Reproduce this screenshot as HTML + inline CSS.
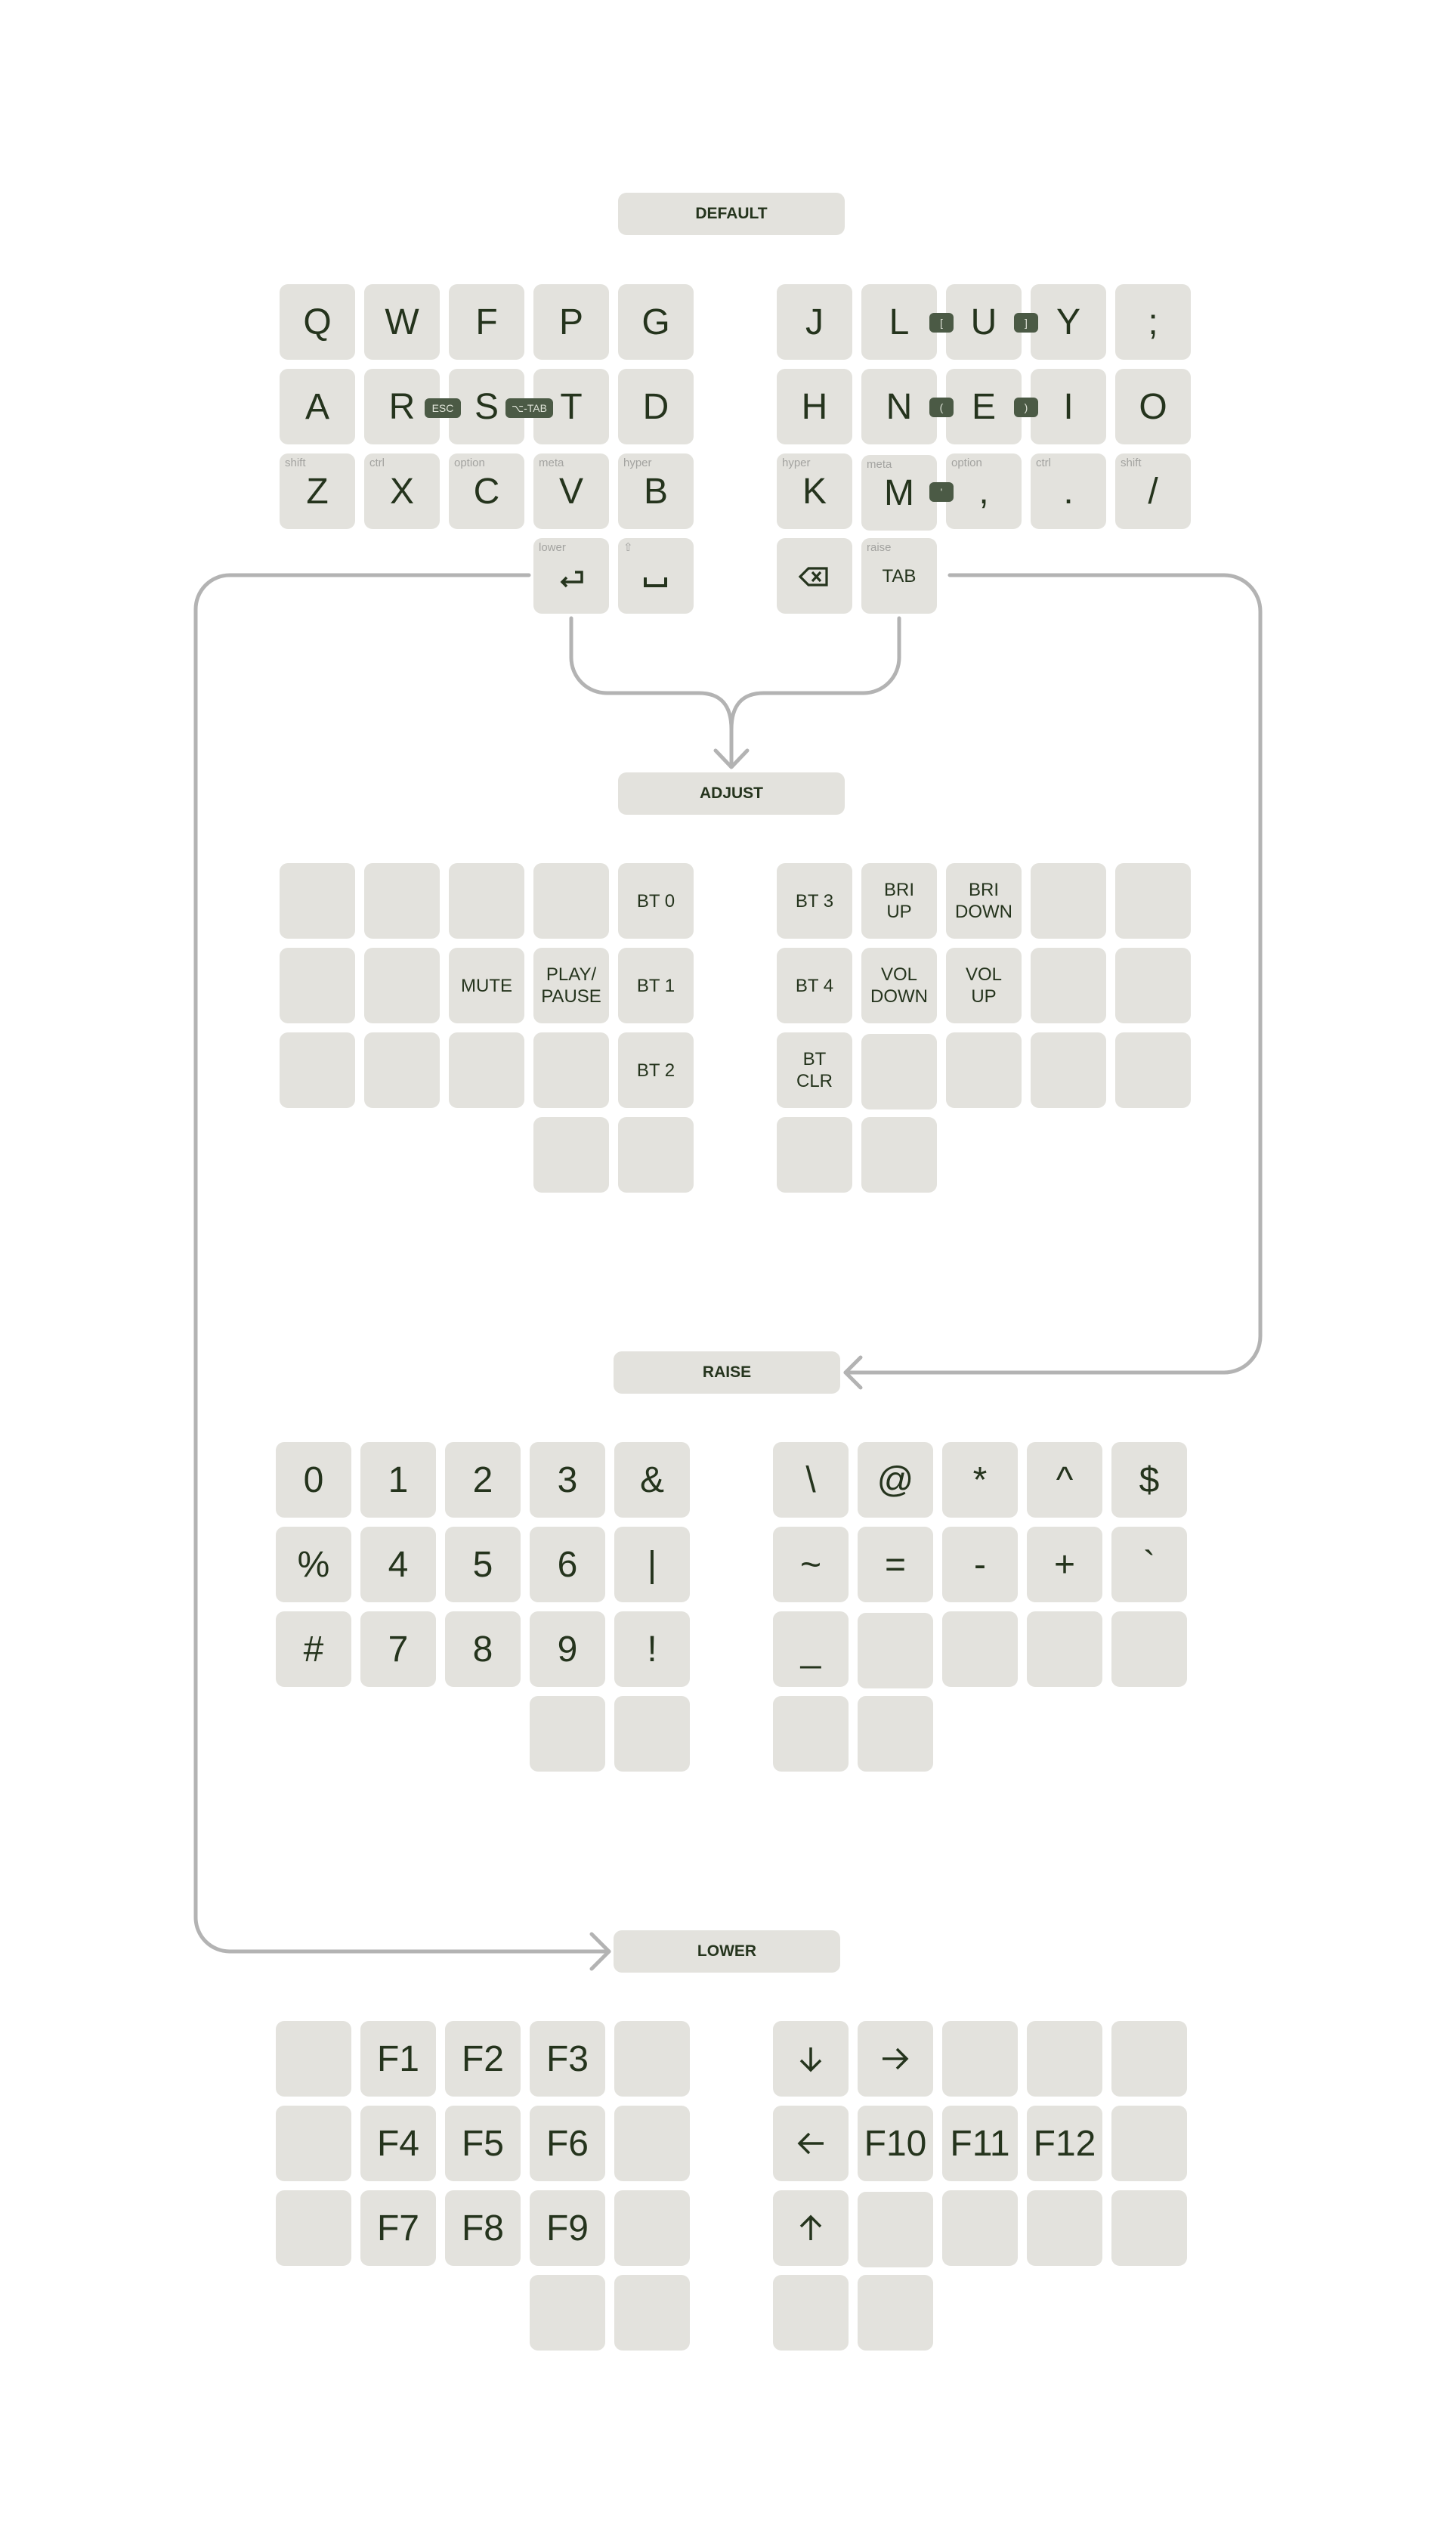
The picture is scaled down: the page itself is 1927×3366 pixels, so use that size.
<!DOCTYPE html>
<html><head><meta charset="utf-8">
<style>
html,body{margin:0;padding:0;background:#fff;}
body{width:1927px;height:3366px;position:relative;overflow:hidden;font-family:"Liberation Sans",sans-serif;}
.k{position:absolute;width:100px;height:100px;background:#e3e2dd;border-radius:11px;display:flex;align-items:center;justify-content:center;color:#25341d;font-size:48px;text-align:center;}
.s{font-size:24px;line-height:29px;}
.m{position:absolute;left:7px;top:4px;font-size:15px;color:#a3a3a0;line-height:18px;}
.lbl{position:absolute;width:300px;height:56px;background:#e3e2dd;border-radius:11px;display:flex;align-items:center;justify-content:center;color:#25341d;font-size:21px;font-weight:bold;}
.b{position:absolute;height:26px;background:#4b5a45;border-radius:6px;color:#dfe3d8;font-size:14px;display:flex;align-items:center;justify-content:center;z-index:2;}
svg.lines{position:absolute;left:0;top:0;}
</style></head><body>
<svg class="lines" width="1927" height="3366" fill="none" stroke="#b3b3b3" stroke-width="5" stroke-linecap="round" stroke-linejoin="round">
<path d="M700 761 H304 A45 45 0 0 0 259 806 V2537 A45 45 0 0 0 304 2582 H806"/>
<path d="M783 2559 L806 2582 L783 2605"/>
<path d="M1257 761 H1620 A48 48 0 0 1 1668 809 V1768 A48 48 0 0 1 1620 1816 H1119"/>
<path d="M1139 1796 L1119 1816 L1139 1836"/>
<path d="M756 818 V870 A47 47 0 0 0 803 917 H925 Q968 917 968 965 V1014"/>
<path d="M1190 818 V870 A47 47 0 0 1 1143 917 H1011 Q968 917 968 965"/>
<path d="M947 993 L968 1015 L989 993"/>
</svg>

<div class="lbl" style="left:818px;top:255px">DEFAULT</div>
<div class="k" style="left:370px;top:376px">Q</div>
<div class="k" style="left:482px;top:376px">W</div>
<div class="k" style="left:594px;top:376px">F</div>
<div class="k" style="left:706px;top:376px">P</div>
<div class="k" style="left:818px;top:376px">G</div>
<div class="k" style="left:1028px;top:376px">J</div>
<div class="k" style="left:1140px;top:376px">L</div>
<div class="k" style="left:1252px;top:376px">U</div>
<div class="k" style="left:1364px;top:376px">Y</div>
<div class="k" style="left:1476px;top:376px">;</div>

<div class="k" style="left:370px;top:488px">A</div>
<div class="k" style="left:482px;top:488px">R</div>
<div class="k" style="left:594px;top:488px">S</div>
<div class="k" style="left:706px;top:488px">T</div>
<div class="k" style="left:818px;top:488px">D</div>
<div class="k" style="left:1028px;top:488px">H</div>
<div class="k" style="left:1140px;top:488px">N</div>
<div class="k" style="left:1252px;top:488px">E</div>
<div class="k" style="left:1364px;top:488px">I</div>
<div class="k" style="left:1476px;top:488px">O</div>

<div class="k" style="left:370px;top:600px"><span class="m">shift</span>Z</div>
<div class="k" style="left:482px;top:600px"><span class="m">ctrl</span>X</div>
<div class="k" style="left:594px;top:600px"><span class="m">option</span>C</div>
<div class="k" style="left:706px;top:600px"><span class="m">meta</span>V</div>
<div class="k" style="left:818px;top:600px"><span class="m">hyper</span>B</div>
<div class="k" style="left:1028px;top:600px"><span class="m">hyper</span>K</div>
<div class="k" style="left:1140px;top:602px"><span class="m">meta</span>M</div>
<div class="k" style="left:1252px;top:600px"><span class="m">option</span>,</div>
<div class="k" style="left:1364px;top:600px"><span class="m">ctrl</span>.</div>
<div class="k" style="left:1476px;top:600px"><span class="m">shift</span>/</div>

<div class="k" style="left:706px;top:712px"><span class="m">lower</span>
<svg width="100" height="100" style="position:absolute;left:0;top:0" fill="none" stroke="#25341d" stroke-width="3.5"><path d="M55 45 H64 V58 H38"/><path d="M44 52 L38 58 L44 64"/></svg></div>
<div class="k" style="left:818px;top:712px"><span class="m">⇧</span>
<svg width="100" height="100" style="position:absolute;left:0;top:0" fill="none" stroke="#25341d" stroke-width="4"><path d="M36 52 V63 H63 V52"/></svg></div>
<div class="k" style="left:1028px;top:712px">
<svg width="100" height="100" style="position:absolute;left:0;top:0" fill="none" stroke="#25341d" stroke-width="3.2" stroke-linejoin="miter"><path d="M42 40 H66 V62 H42 L31 51 Z"/><path d="M47 45 L58 57 M58 45 L47 57"/></svg></div>
<div class="k s" style="left:1140px;top:712px"><span class="m">raise</span>TAB</div>

<div class="b" style="left:562px;top:527px;width:48px">ESC</div>
<div class="b" style="left:669px;top:527px;width:63px">⌥-TAB</div>
<div class="b" style="left:1230px;top:414px;width:32px">[</div>
<div class="b" style="left:1342px;top:414px;width:32px">]</div>
<div class="b" style="left:1230px;top:526px;width:32px">(</div>
<div class="b" style="left:1342px;top:526px;width:32px">)</div>
<div class="b" style="left:1230px;top:638px;width:32px">'</div>

<div class="lbl" style="left:818px;top:1022px">ADJUST</div>
<div class="k" style="left:370px;top:1142px"></div>
<div class="k" style="left:482px;top:1142px"></div>
<div class="k" style="left:594px;top:1142px"></div>
<div class="k" style="left:706px;top:1142px"></div>
<div class="k s" style="left:818px;top:1142px">BT 0</div>
<div class="k s" style="left:1028px;top:1142px">BT 3</div>
<div class="k s" style="left:1140px;top:1142px">BRI<br>UP</div>
<div class="k s" style="left:1252px;top:1142px">BRI<br>DOWN</div>
<div class="k" style="left:1364px;top:1142px"></div>
<div class="k" style="left:1476px;top:1142px"></div>

<div class="k" style="left:370px;top:1254px"></div>
<div class="k" style="left:482px;top:1254px"></div>
<div class="k s" style="left:594px;top:1254px">MUTE</div>
<div class="k s" style="left:706px;top:1254px">PLAY/<br>PAUSE</div>
<div class="k s" style="left:818px;top:1254px">BT 1</div>
<div class="k s" style="left:1028px;top:1254px">BT 4</div>
<div class="k s" style="left:1140px;top:1254px">VOL<br>DOWN</div>
<div class="k s" style="left:1252px;top:1254px">VOL<br>UP</div>
<div class="k" style="left:1364px;top:1254px"></div>
<div class="k" style="left:1476px;top:1254px"></div>

<div class="k" style="left:370px;top:1366px"></div>
<div class="k" style="left:482px;top:1366px"></div>
<div class="k" style="left:594px;top:1366px"></div>
<div class="k" style="left:706px;top:1366px"></div>
<div class="k s" style="left:818px;top:1366px">BT 2</div>
<div class="k s" style="left:1028px;top:1366px">BT<br>CLR</div>
<div class="k" style="left:1140px;top:1368px"></div>
<div class="k" style="left:1252px;top:1366px"></div>
<div class="k" style="left:1364px;top:1366px"></div>
<div class="k" style="left:1476px;top:1366px"></div>

<div class="k" style="left:706px;top:1478px"></div>
<div class="k" style="left:818px;top:1478px"></div>
<div class="k" style="left:1028px;top:1478px"></div>
<div class="k" style="left:1140px;top:1478px"></div>

<div class="lbl" style="left:812px;top:1788px">RAISE</div>
<div class="k" style="left:365px;top:1908px">0</div>
<div class="k" style="left:477px;top:1908px">1</div>
<div class="k" style="left:589px;top:1908px">2</div>
<div class="k" style="left:701px;top:1908px">3</div>
<div class="k" style="left:813px;top:1908px">&amp;</div>
<div class="k" style="left:1023px;top:1908px">\</div>
<div class="k" style="left:1135px;top:1908px">@</div>
<div class="k" style="left:1247px;top:1908px">*</div>
<div class="k" style="left:1359px;top:1908px">^</div>
<div class="k" style="left:1471px;top:1908px">$</div>

<div class="k" style="left:365px;top:2020px">%</div>
<div class="k" style="left:477px;top:2020px">4</div>
<div class="k" style="left:589px;top:2020px">5</div>
<div class="k" style="left:701px;top:2020px">6</div>
<div class="k" style="left:813px;top:2020px">|</div>
<div class="k" style="left:1023px;top:2020px">~</div>
<div class="k" style="left:1135px;top:2020px">=</div>
<div class="k" style="left:1247px;top:2020px">-</div>
<div class="k" style="left:1359px;top:2020px">+</div>
<div class="k" style="left:1471px;top:2020px">`</div>

<div class="k" style="left:365px;top:2132px">#</div>
<div class="k" style="left:477px;top:2132px">7</div>
<div class="k" style="left:589px;top:2132px">8</div>
<div class="k" style="left:701px;top:2132px">9</div>
<div class="k" style="left:813px;top:2132px">!</div>
<div class="k" style="left:1023px;top:2132px">_</div>
<div class="k" style="left:1135px;top:2134px"></div>
<div class="k" style="left:1247px;top:2132px"></div>
<div class="k" style="left:1359px;top:2132px"></div>
<div class="k" style="left:1471px;top:2132px"></div>

<div class="k" style="left:701px;top:2244px"></div>
<div class="k" style="left:813px;top:2244px"></div>
<div class="k" style="left:1023px;top:2244px"></div>
<div class="k" style="left:1135px;top:2244px"></div>

<div class="lbl" style="left:812px;top:2554px">LOWER</div>
<div class="k" style="left:365px;top:2674px"></div>
<div class="k" style="left:477px;top:2674px">F1</div>
<div class="k" style="left:589px;top:2674px">F2</div>
<div class="k" style="left:701px;top:2674px">F3</div>
<div class="k" style="left:813px;top:2674px"></div>
<div class="k" style="left:1023px;top:2674px"><svg width="40" height="40" fill="none" stroke="#25341d" stroke-width="3.5"><path d="M20 5 V35 M7 22 L20 35 L33 22"/></svg></div>
<div class="k" style="left:1135px;top:2674px"><svg width="40" height="40" fill="none" stroke="#25341d" stroke-width="3.5"><path d="M3 20 H35 M22 7 L35 20 L22 33"/></svg></div>
<div class="k" style="left:1247px;top:2674px"></div>
<div class="k" style="left:1359px;top:2674px"></div>
<div class="k" style="left:1471px;top:2674px"></div>

<div class="k" style="left:365px;top:2786px"></div>
<div class="k" style="left:477px;top:2786px">F4</div>
<div class="k" style="left:589px;top:2786px">F5</div>
<div class="k" style="left:701px;top:2786px">F6</div>
<div class="k" style="left:813px;top:2786px"></div>
<div class="k" style="left:1023px;top:2786px"><svg width="40" height="40" fill="none" stroke="#25341d" stroke-width="3.5"><path d="M37 20 H5 M18 7 L5 20 L18 33"/></svg></div>
<div class="k" style="left:1135px;top:2786px">F10</div>
<div class="k" style="left:1247px;top:2786px">F11</div>
<div class="k" style="left:1359px;top:2786px">F12</div>
<div class="k" style="left:1471px;top:2786px"></div>

<div class="k" style="left:365px;top:2898px"></div>
<div class="k" style="left:477px;top:2898px">F7</div>
<div class="k" style="left:589px;top:2898px">F8</div>
<div class="k" style="left:701px;top:2898px">F9</div>
<div class="k" style="left:813px;top:2898px"></div>
<div class="k" style="left:1023px;top:2898px"><svg width="40" height="40" fill="none" stroke="#25341d" stroke-width="3.5"><path d="M20 36 V5 M7 18 L20 5 L33 18"/></svg></div>
<div class="k" style="left:1135px;top:2900px"></div>
<div class="k" style="left:1247px;top:2898px"></div>
<div class="k" style="left:1359px;top:2898px"></div>
<div class="k" style="left:1471px;top:2898px"></div>

<div class="k" style="left:701px;top:3010px"></div>
<div class="k" style="left:813px;top:3010px"></div>
<div class="k" style="left:1023px;top:3010px"></div>
<div class="k" style="left:1135px;top:3010px"></div>
</body></html>
